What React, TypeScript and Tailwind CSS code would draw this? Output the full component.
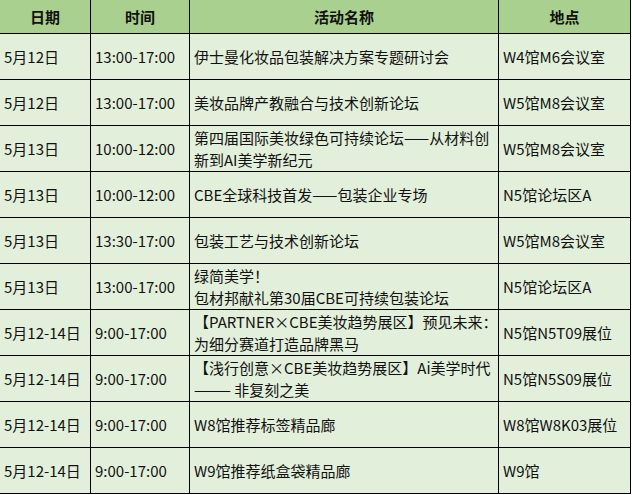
import React from "react";

type Row = { date: string; time: string; name: string[]; place: string };

const rows: Row[] = [
  { date: "5月12日", time: "13:00-17:00", name: ["伊士曼化妆品包装解决方案专题研讨会"], place: "W4馆M6会议室" },
  { date: "5月12日", time: "13:00-17:00", name: ["美妆品牌产教融合与技术创新论坛"], place: "W5馆M8会议室" },
  { date: "5月13日", time: "10:00-12:00", name: ["第四届国际美妆绿色可持续论坛——从材料创", "新到AI美学新纪元"], place: "W5馆M8会议室" },
  { date: "5月13日", time: "10:00-12:00", name: ["CBE全球科技首发——包装企业专场"], place: "N5馆论坛区A" },
  { date: "5月13日", time: "13:30-17:00", name: ["包装工艺与技术创新论坛"], place: "W5馆M8会议室" },
  { date: "5月13日", time: "13:00-17:00", name: ["绿简美学！", "包材邦献礼第30届CBE可持续包装论坛"], place: "N5馆论坛区A" },
  { date: "5月12-14日", time: "9:00-17:00", name: ["【PARTNER×CBE美妆趋势展区】预见未来：", "为细分赛道打造品牌黑马"], place: "N5馆N5T09展位" },
  { date: "5月12-14日", time: "9:00-17:00", name: ["【浅行创意×CBE美妆趋势展区】Ai美学时代", "——— 非复刻之美"], place: "N5馆N5S09展位" },
  { date: "5月12-14日", time: "9:00-17:00", name: ["W8馆推荐标签精品廊"], place: "W8馆W8K03展位" },
  { date: "5月12-14日", time: "9:00-17:00", name: ["W9馆推荐纸盒袋精品廊"], place: "W9馆" },
];

const cell = "border-r border-b border-black flex items-center bg-[#e2efda] px-[4px] whitespace-nowrap overflow-hidden";
const head = "border-r border-b border-black flex items-center justify-center bg-[#a9d08e] font-bold";

export default function App() {
  return (
    <div
      className="w-[632px] h-[495px] bg-white text-[15px] text-[#111] leading-[22px]"
      style={{ fontFamily: '"Noto Sans CJK SC", "Noto Sans", sans-serif' }}
    >
      <div className="grid grid-cols-[91px_99px_309px_132px] grid-rows-[34px_repeat(10,46px)]">
        <div className={head}>日期</div>
        <div className={head}>时间</div>
        <div className={head}>活动名称</div>
        <div className={head}>地点</div>
        {rows.map((r, i) => (
          <React.Fragment key={i}>
            <div className={cell}>{r.date}</div>
            <div className={cell}>{r.time}</div>
            <div className={cell}>
              <div className="flex flex-col">
                {r.name.map((l, j) => (
                  <span key={j}>{l}</span>
                ))}
              </div>
            </div>
            <div className={cell}>{r.place}</div>
          </React.Fragment>
        ))}
      </div>
    </div>
  );
}
